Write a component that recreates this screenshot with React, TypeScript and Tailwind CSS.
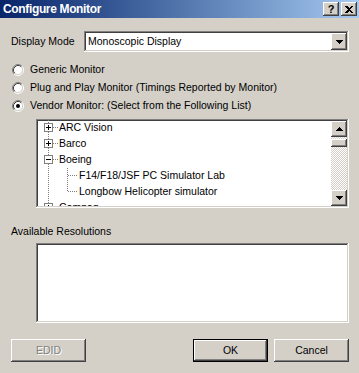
import React from "react";

const raised =
  "shadow-[inset_-1px_-1px_0_#404040,inset_1px_1px_0_#fff,inset_-2px_-2px_0_#808080]";
const sunken =
  "shadow-[inset_-1px_-1px_0_#fff,inset_1px_1px_0_#808080,inset_-2px_-2px_0_#d4d0c8,inset_2px_2px_0_#404040]";

function Arrow({ dir }: { dir: "up" | "down" }) {
  return (
    <svg width="7" height="4" viewBox="0 0 7 4" shapeRendering="crispEdges">
      {dir === "down" ? <path d="M0 0h7L3.5 4z" fill="#000" /> : <path d="M0 4h7L3.5 0z" fill="#000" />}
    </svg>
  );
}

function Radio({ checked, label }: { checked?: boolean; label: string }) {
  return (
    <div className="h-[18px] flex items-center">
      <svg width="12" height="12" viewBox="0 0 12 12" className="ml-[1px]">
        <circle cx="6" cy="6" r="4.5" fill="#fff" />
        <path d="M2.11 9.89A5.5 5.5 0 0 1 9.89 2.11" stroke="#808080" fill="none" />
        <path d="M9.89 2.11A5.5 5.5 0 0 1 2.11 9.89" stroke="#fff" fill="none" />
        <path d="M2.82 9.18A4.5 4.5 0 0 1 9.18 2.82" stroke="#404040" fill="none" />
        <path d="M9.18 2.82A4.5 4.5 0 0 1 2.82 9.18" stroke="#d4d0c8" fill="none" />
        {checked && <circle cx="6" cy="6" r="2" fill="#000" />}
      </svg>
      <span className="ml-[6px]">{label}</span>
    </div>
  );
}

function Node({ box, depth, last, label }: { box?: "plus" | "minus"; depth: 0 | 1; last?: boolean; label: string }) {
  const w = depth === 0 ? 21 : 41;
  return (
    <div className="h-[16px] flex items-center whitespace-nowrap">
      <svg width={w} height="16" viewBox={`0 0 ${w} 16`} shapeRendering="crispEdges" className="shrink-0">
        <line x1="10.5" y1="0" x2="10.5" y2="16" stroke="#808080" strokeDasharray="1 1" />
        {depth === 0 ? (
          <>
            <line x1="15" y1="7.5" x2="21" y2="7.5" stroke="#808080" strokeDasharray="1 1" />
            <rect x="6.5" y="3.5" width="8" height="8" fill="#fff" stroke="#808080" />
            <line x1="8" y1="7.5" x2="13" y2="7.5" stroke="#000" />
            {box === "plus" && <line x1="10.5" y1="5" x2="10.5" y2="10" stroke="#000" />}
          </>
        ) : (
          <>
            <line x1="29.5" y1="0" x2="29.5" y2={last ? 8 : 16} stroke="#808080" strokeDasharray="1 1" />
            <line x1="30" y1="7.5" x2="40" y2="7.5" stroke="#808080" strokeDasharray="1 1" />
          </>
        )}
      </svg>
      <span>{label}</span>
    </div>
  );
}

export default function App() {
  return (
    <div className="w-[359px] h-[373px] bg-[#d4d0c8] flex flex-col font-['Liberation_Sans',Arial,sans-serif] text-[10.5px] text-black overflow-hidden">
      {/* title bar */}
      <div className="h-[18px] flex items-center bg-gradient-to-r from-[#0a246a] to-[#a6caf0] pl-[3px] pr-[2px]">
        <span className="text-white font-bold text-[12px] tracking-[-0.35px] flex-1">Configure Monitor</span>
        <div className={`w-[16px] h-[14px] bg-[#d4d0c8] ${raised} flex items-center justify-center`}>
          <span className="font-bold text-[11px] leading-none">?</span>
        </div>
        <div className={`ml-[2px] w-[16px] h-[14px] bg-[#d4d0c8] ${raised} flex items-center justify-center`}>
          <svg width="8" height="7" viewBox="0 0 8 7" shapeRendering="crispEdges">
            <path d="M0 0h2l2 2 2-2h2L5 3.5 8 7H6L4 5 2 7H0l3-3.5z" fill="#000" />
          </svg>
        </div>
      </div>

      <div className="flex flex-col pl-[11px] pr-[10px]">
        {/* display mode */}
        <div className="mt-[13px] h-[21px] flex items-center">
          <span className="w-[73px]">Display Mode</span>
          <div className={`flex-1 h-[21px] bg-white ${sunken} p-[2px] flex items-center`}>
            <span className="flex-1 pl-[2px]">Monoscopic Display</span>
            <div className={`w-[16px] h-[17px] bg-[#d4d0c8] ${raised} flex items-center justify-center`}>
              <Arrow dir="down" />
            </div>
          </div>
        </div>

        {/* radios */}
        <div className="mt-[9px] flex flex-col">
          <Radio label="Generic Monitor" />
          <Radio label="Plug and Play Monitor (Timings Reported by Monitor)" />
          <Radio checked label="Vendor Monitor: (Select from the Following List)" />
        </div>

        {/* vendor tree */}
        <div className={`mt-[4px] ml-[25px] h-[89px] bg-white ${sunken} p-[2px] flex`}>
          <div className="flex-1 overflow-hidden -mt-[1px]">
            <Node depth={0} box="plus" label="ARC Vision" />
            <Node depth={0} box="plus" label="Barco" />
            <Node depth={0} box="minus" label="Boeing" />
            <Node depth={1} label="F14/F18/JSF PC Simulator Lab" />
            <Node depth={1} last label="Longbow Helicopter simulator" />
            <Node depth={0} box="plus" label="Compaq" />
          </div>
          <div className="w-[16px] flex flex-col bg-[repeating-conic-gradient(#d4d0c8_0_25%,#fff_0_50%)] bg-[length:2px_2px]">
            <div className={`h-[16px] bg-[#d4d0c8] ${raised} flex items-center justify-center`}>
              <Arrow dir="up" />
            </div>
            <div className={`mt-[2px] h-[8px] bg-[#d4d0c8] ${raised}`} />
            <div className="flex-1" />
            <div className={`h-[16px] bg-[#d4d0c8] ${raised} flex items-center justify-center`}>
              <Arrow dir="down" />
            </div>
          </div>
        </div>

        {/* resolutions */}
        <div className="mt-[17px] h-[14px] flex items-center">Available Resolutions</div>
        <div className={`mt-[4px] ml-[25px] h-[80px] bg-white ${sunken}`} />

        {/* buttons */}
        <div className="mt-[16px] flex items-center">
          <div className={`w-[75px] h-[23px] ${raised} flex items-center justify-center text-[#808080] [text-shadow:1px_1px_0_#fff]`}>
            EDID
          </div>
          <div className="flex-1" />
          <div className={`w-[75px] h-[23px] border border-black ${raised} flex items-center justify-center`}>OK</div>
          <div className={`ml-[6px] w-[75px] h-[23px] ${raised} flex items-center justify-center`}>Cancel</div>
        </div>
      </div>
    </div>
  );
}
